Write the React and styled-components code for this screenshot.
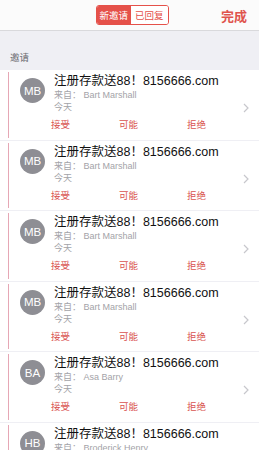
import React from "react";
import styled, { createGlobalStyle } from "styled-components";

const GlobalStyle = createGlobalStyle`
  html, body {
    margin: 0;
    padding: 0;
    background: #efeff4;
    overflow: hidden;
  }
  body {
    font-family: "Liberation Sans", "Noto Sans CJK SC", sans-serif;
  }
`;

const Page = styled.div`
  width: 259px;
  height: 450px;
  overflow: hidden;
  background: #efeff4;
`;

const Header = styled.div`
  height: 31px;
  background: #fbfbfb;
  border-bottom: 1px solid #d9d9dc;
  box-sizing: border-box;
  display: grid;
  grid-template-columns: 1fr auto 1fr;
  align-items: center;
`;

const Segmented = styled.div`
  grid-column: 2;
  display: flex;
  height: 20px;
  margin-left: 6px;
  border: 1px solid #e5514a;
  border-radius: 3px;
  overflow: hidden;
  box-sizing: border-box;
`;

const Segment = styled.div`
  display: flex;
  align-items: center;
  padding: 0 ${(p) => (p.active ? "2.5px" : "4.5px")};
  font-size: 9.5px;
  color: ${(p) => (p.active ? "#fff" : "#e5514a")};
  background: ${(p) => (p.active ? "#e5514a" : "#fff")};
`;

const Done = styled.div`
  grid-column: 3;
  justify-self: end;
  padding-right: 12px;
  font-size: 13px;
  font-weight: bold;
  color: #e0544d;
`;

const SectionLabel = styled.div`
  height: 39px;
  box-sizing: border-box;
  display: flex;
  align-items: flex-end;
  padding: 0 0 6px 10px;
  font-size: 9.5px;
  color: #6d6d72;
`;

const Row = styled.div`
  height: 70.5px;
  box-sizing: border-box;
  background: #fff;
  padding: 2px 0 2px 8px;
  border-bottom: 1.5px solid #efeff4;
`;

const Inner = styled.div`
  height: 100%;
  border-left: 1.5px solid #e6a7b5;
  display: flex;
  flex-direction: column;
`;

const Top = styled.div`
  display: flex;
  align-items: flex-start;
  padding: 2px 0 0 11px;
`;

const Avatar = styled.div`
  width: 25px;
  height: 25px;
  margin-top: 4px;
  border-radius: 50%;
  background: #8e8e94;
  color: #fff;
  font-size: 11.5px;
  display: flex;
  align-items: center;
  justify-content: center;
  flex-shrink: 0;
`;

const Texts = styled.div`
  flex: 1;
  margin-left: 9px;
  display: flex;
  flex-direction: column;
`;

const Title = styled.div`
  font-size: 12.5px;
  line-height: 15px;
  color: #111;
  white-space: nowrap;
`;

const Meta = styled.div`
  font-size: 9px;
  line-height: 12px;
  color: #a3a3a8;
`;

const Chevron = styled.svg`
  margin: 29px 10px 0 0;
  flex-shrink: 0;
`;

const Actions = styled.div`
  display: grid;
  grid-template-columns: repeat(3, 68px);
  padding-left: 42px;
  margin-top: 6px;
`;

const Action = styled.div`
  font-size: 9.5px;
  line-height: 12px;
  color: #d9534f;
`;

const invites = [
  { initials: "MB", name: "Bart Marshall" },
  { initials: "MB", name: "Bart Marshall" },
  { initials: "MB", name: "Bart Marshall" },
  { initials: "MB", name: "Bart Marshall" },
  { initials: "BA", name: "Asa Barry" },
  { initials: "HB", name: "Broderick Henry" },
];

const App = () => {
  return (
    <Page>
      <GlobalStyle />
      <Header>
        <Segmented>
          <Segment active>新邀请</Segment>
          <Segment>已回复</Segment>
        </Segmented>
        <Done>完成</Done>
      </Header>
      <SectionLabel>邀请</SectionLabel>
      {invites.map((item, i) => (
        <Row key={i}>
          <Inner>
            <Top>
              <Avatar>{item.initials}</Avatar>
              <Texts>
                <Title>注册存款送88！8156666.com</Title>
                <Meta>来自： {item.name}</Meta>
                <Meta>今天</Meta>
              </Texts>
              <Chevron width="6" height="10" viewBox="0 0 6 10">
                <polyline
                  points="1,1 5,5 1,9"
                  fill="none"
                  stroke="#c7c7cc"
                  strokeWidth="1.2"
                />
              </Chevron>
            </Top>
            <Actions>
              <Action>接受</Action>
              <Action>可能</Action>
              <Action>拒绝</Action>
            </Actions>
          </Inner>
        </Row>
      ))}
    </Page>
  );
};

export default App;
